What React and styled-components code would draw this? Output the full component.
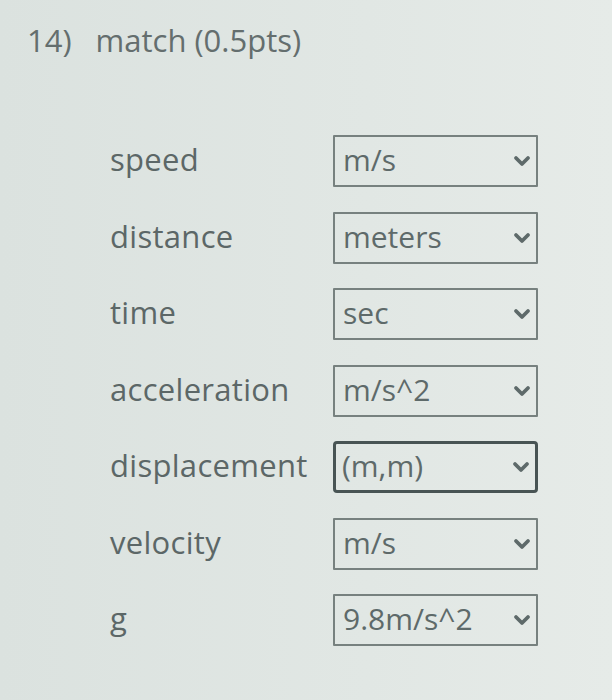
import React from "react";
import styled, { createGlobalStyle } from "styled-components";

const Global = createGlobalStyle`
  html, body { margin: 0; padding: 0; background: #dfe5e2; }
  body { font-family: "Open Sans", "Noto Sans", sans-serif; color: #5c6767; }
`;

const Page = styled.div`
  width: 612px;
  height: 700px;
  box-sizing: border-box;
  padding: 20px 0 0 27px;
  background: linear-gradient(90deg, #dbe2df 0%, #e1e7e4 60%, #e6ebe8 100%);
`;

const Title = styled.div`
  font-size: 31px;
  line-height: 40px;
  display: flex;
  gap: 24px;
  color: #646e6e;
`;

const Grid = styled.div`
  margin: 75px 0 0 83px;
  display: grid;
  grid-template-columns: 223px 205px;
  grid-auto-rows: 52px;
  row-gap: 24.5px;
  align-items: center;
`;

const Label = styled.div`
  font-size: 31px;
  line-height: 40px;
  letter-spacing: 0.3px;
  white-space: nowrap;
  padding-bottom: 4px;
`;

const Box = styled.div`
  height: 52px;
  box-sizing: border-box;
  border: ${(p) => (p.$focused ? "3px solid #485454" : "2px solid #77817f")};
  border-radius: ${(p) => (p.$focused ? "4px" : "1px")};
  display: flex;
  align-items: center;
  justify-content: space-between;
  padding: 0 5px 0 ${(p) => (p.$focused ? "6px" : "8px")};
  font-size: 30px;
  color: #5e6a6a;
`;

const Value = styled.span`
  line-height: 40px;
  padding-bottom: 2px;
`;

const Chevron = () => (
  <svg width="18" height="12" viewBox="0 0 18 12">
    <path d="M3 3 L9 9 L15 3" fill="none" stroke="#5e6a6a" strokeWidth="3.8" strokeLinecap="round" strokeLinejoin="round" />
  </svg>
);

const rows = [
  ["speed", "m/s"],
  ["distance", "meters"],
  ["time", "sec"],
  ["acceleration", "m/s^2"],
  ["displacement", "(m,m)", true],
  ["velocity", "m/s"],
  ["g", "9.8m/s^2"],
];

export default function App() {
  return (
    <Page>
      <Global />
      <Title>
        <span>14)</span>
        <span>match (0.5pts)</span>
      </Title>
      <Grid>
        {rows.map(([l, v, f]) => (
          <React.Fragment key={l}>
            <Label>{l}</Label>
            <Box $focused={f}>
              <Value>{v}</Value>
              <Chevron />
            </Box>
          </React.Fragment>
        ))}
      </Grid>
    </Page>
  );
}
